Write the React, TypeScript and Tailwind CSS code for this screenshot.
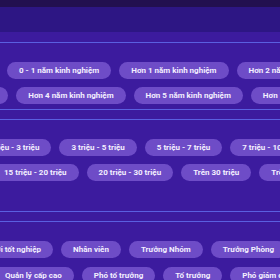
const experience = [
    ["0 - 1 năm kinh nghiệm", "Hơn 1 năm kinh nghiệm", "Hơn 2 năm kinh nghiệm"],
    ["Hơn 3 năm kinh nghiệm", "Hơn 4 năm kinh nghiệm", "Hơn 5 năm kinh nghiệm", "Hơn 10 năm kinh nghiệm"],
];

const salary = [
    ["1 triệu - 3 triệu", "3 triệu - 5 triệu", "5 triệu - 7 triệu", "7 triệu - 10 triệu"],
    ["15 triệu - 20 triệu", "20 triệu - 30 triệu", "Trên 30 triệu", "Trên 50 triệu"],
];

const levels = [
    ["Mới tốt nghiệp", "Nhân viên", "Trưởng Nhóm", "Trưởng Phòng"],
    ["Quản lý cấp cao", "Phó tổ trưởng", "Tổ trưởng", "Phó giám đốc"],
];

const Pill = ({ label }: { label: string }) => (
    <span className="shrink-0 h-[17px] px-[12px] flex items-center rounded-full bg-[#6e4cc7] text-[#f4f0ff] text-[8px] font-bold leading-none whitespace-nowrap">
        {label}
    </span>
);

const Row = ({ items, offset }: { items: string[]; offset: string }) => (
    <div className="w-full overflow-hidden">
        <div className={`flex gap-2 ${offset}`}>
            {items.map((item) => (
                <Pill key={item} label={item} />
            ))}
        </div>
    </div>
);

export default function App() {
    return (
        <div className="w-[280px] h-[280px] overflow-hidden bg-[#3c1b9e]" style={{ fontFamily: "Roboto, 'Noto Sans', sans-serif" }}>
            {/* previous block */}
            <div className="h-[7px] bg-[#221050]" />
            <div className="h-[25px] bg-[#2d1684]" />
            <div className="h-[10px]" />

            {/* Experience */}
            <section className="border-t border-b border-[#5a5fe0] pt-[19px] pb-[5px] flex flex-col gap-2">
                <Row items={experience[0]} offset="ml-[7px]" />
                <Row items={experience[1]} offset="ml-[-101px]" />
            </section>

            <div className="h-[9px]" />

            {/* Salary */}
            <section className="border-t border-b border-[#5a5fe0] pt-[19px] pb-[30px] flex flex-col gap-2">
                <Row items={salary[0]} offset="ml-[-26px]" />
                <Row items={salary[1]} offset="ml-[-8px]" />
            </section>

            <div className="h-[9px]" />

            {/* Level */}
            <section className="border-t border-[#5a5fe0] pt-[19px] flex flex-col gap-[9px]">
                <Row items={levels[0]} offset="ml-[-23px]" />
                <Row items={levels[1]} offset="ml-[-7px]" />
            </section>
        </div>
    );
}
